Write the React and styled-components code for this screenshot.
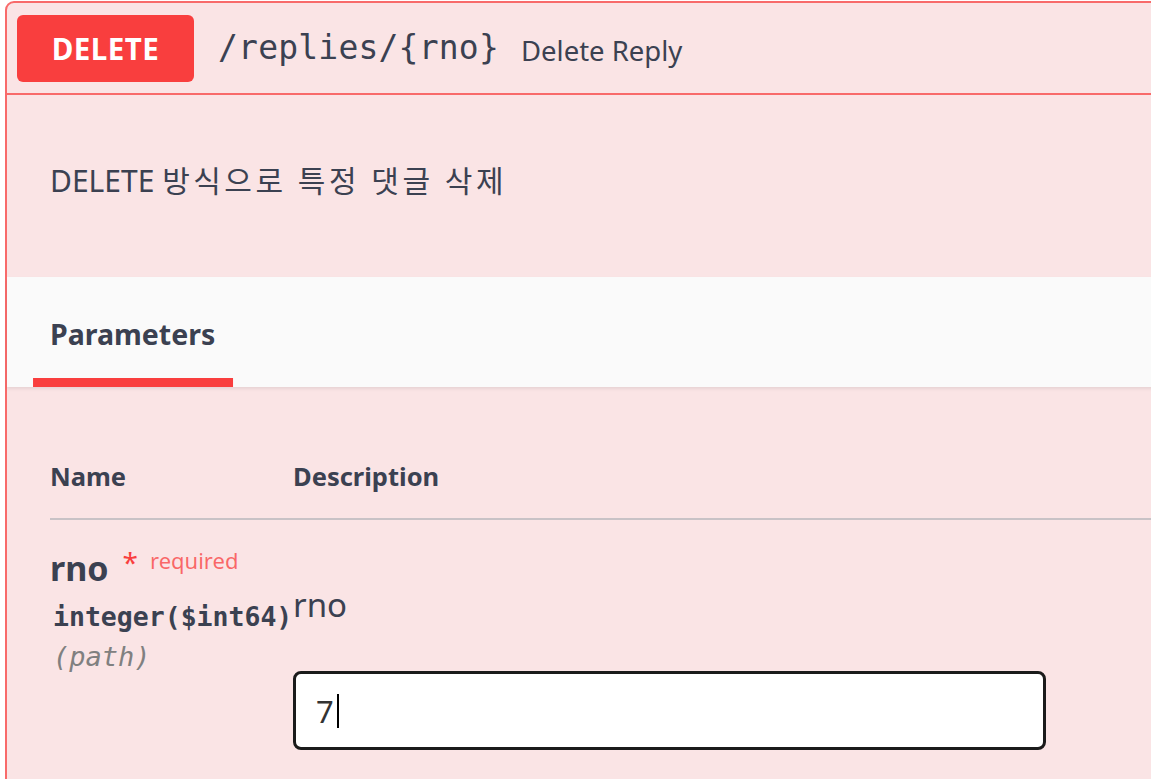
import React from "react";
import styled, { createGlobalStyle } from "styled-components";

const Global = createGlobalStyle`
  html, body { margin: 0; padding: 0; background: #ffffff; overflow: hidden; }
  body { font-family: "Noto Sans", "Noto Sans CJK KR", sans-serif; color: #3b4151; }
`;

const Page = styled.div`
  padding: 1px 0 0 5px;
  width: 1151px;
  height: 779px;
  box-sizing: border-box;
  overflow: hidden;
`;

const Card = styled.section`
  width: 1220px;
  border: 2px solid #f86a6a;
  border-radius: 9px;
  background: #fae4e5;
  min-height: 800px;
`;

const Summary = styled.header`
  display: flex;
  align-items: center;
  height: 90px;
  padding: 0 10px;
  border-bottom: 2px solid #f86a6a;
`;

const Method = styled.span`
  display: flex;
  align-items: center;
  justify-content: center;
  width: 177px;
  height: 67px;
  border-radius: 6px;
  background: #f93e3e;
  color: #ffffff;
  font-weight: 700;
  font-size: 29.5px;
  letter-spacing: 0.5px;
`;

const Titles = styled.div`
  display: flex;
  align-items: baseline;
  margin-left: 24px;
  margin-top: -2px;
`;

const Path = styled.span`
  font-family: "DejaVu Sans Mono", monospace;
  font-size: 33px;
  letter-spacing: 0.2px;
  color: #3b4151;
`;

const Subtitle = styled.span`
  margin-left: 22px;
  font-size: 27.5px;
  color: #3b4151;
  position: relative;
  top: 2px;
`;

const Description = styled.p`
  margin: 0;
  height: 182px;
  box-sizing: border-box;
  padding: 66px 0 0 43px;
  font-size: 30px;
  line-height: 40px;
  color: #3b4151;
`;

const Hangul = styled.span`
  letter-spacing: 3.5px;
`;

const TabHeader = styled.div`
  background: #fafafa;
  box-shadow: 0 2px 3px rgba(0, 0, 0, 0.08);
  padding: 41px 0 36px 43px;
  position: relative;
`;

const TabLabel = styled.span`
  position: relative;
  display: inline-block;
  font-weight: 700;
  font-size: 28.5px;
  line-height: 33px;
  color: #3b4151;

  &::after {
    content: "";
    position: absolute;
    left: 50%;
    transform: translateX(-50%);
    width: 121%;
    height: 9px;
    bottom: -36px;
    background: #f93e3e;
  }
`;

const ParamsBody = styled.div`
  padding: 0 0 0 43px;
`;

const Row = styled.div`
  display: grid;
  grid-template-columns: 243px 1fr;
`;

const HeadRow = styled(Row)`
  padding: 74px 0 27px;
  border-bottom: 2px solid #c8c2c6;
`;

const HeadCell = styled.span`
  font-weight: 700;
  font-size: 25.5px;
  line-height: 30px;
  color: #3b4151;
`;

const ParamRow = styled(Row)`
  padding-top: 27px;
`;

const NameCell = styled.div`
  display: flex;
  flex-direction: column;
  white-space: nowrap;
`;

const NameLine = styled.div`
  font-weight: 700;
  font-size: 34px;
  line-height: 42px;
  color: #3b4151;
`;

const Star = styled.span`
  position: relative;
  top: -8px;
  margin-left: 14px;
  font-size: 28px;
  font-weight: 400;
  color: #f93e3e;
`;

const Required = styled.span`
  position: relative;
  top: -12px;
  margin-left: 12px;
  font-size: 22px;
  font-weight: 400;
  color: rgba(249, 62, 62, 0.75);
`;

const TypeLine = styled.div`
  font-family: "DejaVu Sans Mono", monospace;
  font-weight: 700;
  font-size: 26.5px;
  line-height: 40px;
  margin-left: 3px;
  margin-top: 4px;
  color: #3b4151;
`;

const InLine = styled.div`
  font-family: "DejaVu Sans Mono", monospace;
  font-style: italic;
  font-size: 27px;
  line-height: 40px;
  margin-left: 3px;
  color: #808080;
`;

const DescCell = styled.div`
  display: flex;
  flex-direction: column;
  padding-top: 38px;
`;

const DescText = styled.div`
  font-size: 33px;
  line-height: 40px;
  color: #3b4151;
`;

const InputBox = styled.div`
  margin-top: 46px;
  width: 753px;
  height: 79px;
  box-sizing: border-box;
  border: 3px solid #1b1b1b;
  border-radius: 8px;
  background: #ffffff;
  display: flex;
  align-items: center;
  padding-left: 20px;
  font-size: 31px;
  color: #333333;
`;

const Caret = styled.span`
  display: inline-block;
  width: 2px;
  height: 34px;
  background: #000000;
  margin-left: 3px;
`;

export default function App() {
  return (
    <>
      <Global />
      <Page>
        <Card>
          <Summary>
            <Method>DELETE</Method>
            <Titles>
              <Path>/replies/&#123;rno&#125;</Path>
              <Subtitle>Delete Reply</Subtitle>
            </Titles>
          </Summary>
          <Description>
            DELETE <Hangul>방식으로 특정 댓글 삭제</Hangul>
          </Description>
          <TabHeader>
            <TabLabel>Parameters</TabLabel>
          </TabHeader>
          <ParamsBody>
            <HeadRow>
              <HeadCell>Name</HeadCell>
              <HeadCell>Description</HeadCell>
            </HeadRow>
            <ParamRow>
              <NameCell>
                <NameLine>
                  rno<Star>*</Star>
                  <Required>required</Required>
                </NameLine>
                <TypeLine>integer($int64)</TypeLine>
                <InLine>(path)</InLine>
              </NameCell>
              <DescCell>
                <DescText>rno</DescText>
                <InputBox>
                  7<Caret />
                </InputBox>
              </DescCell>
            </ParamRow>
          </ParamsBody>
        </Card>
      </Page>
    </>
  );
}
